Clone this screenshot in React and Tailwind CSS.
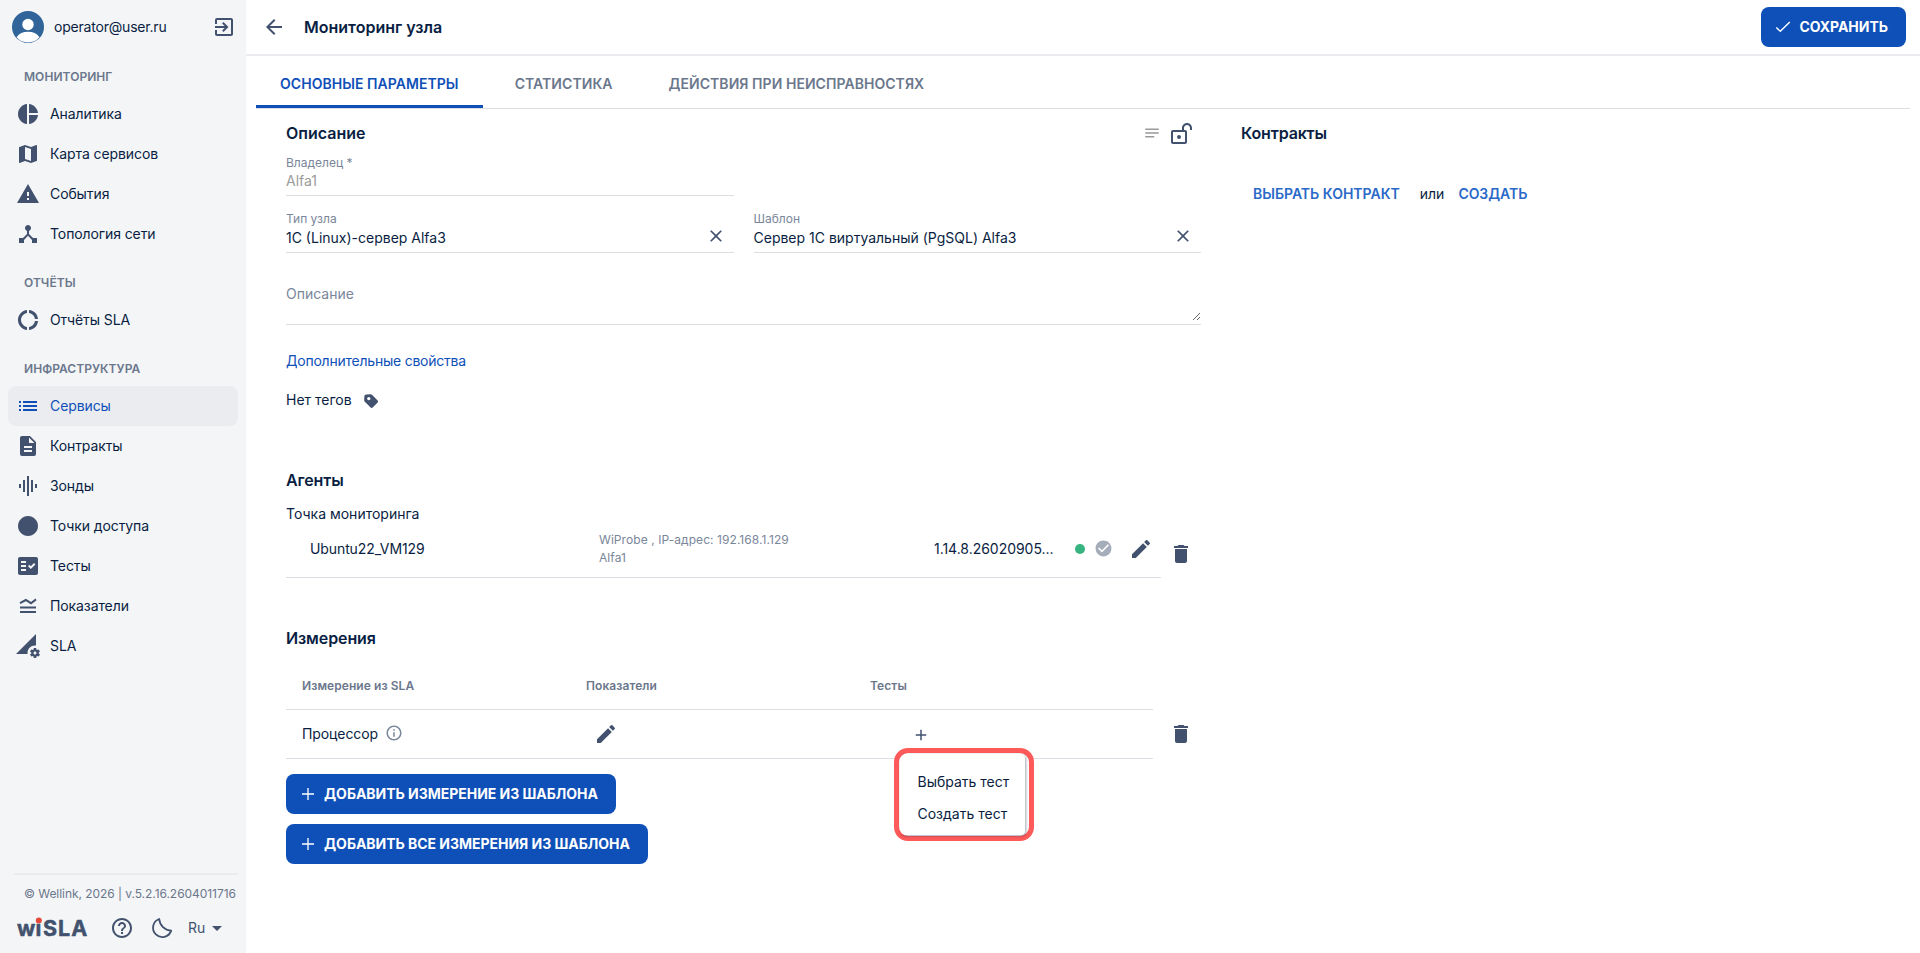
import React, { useState } from "react";
import {
  MdPieChart,
  MdMap,
  MdWarning,
  MdDeviceHub,
  MdDonutLarge,
  MdList,
  MdGraphicEq,
  MdCircle,
  MdFactCheck,
  MdPermDataSetting,
  MdHelpOutline,
  MdExitToApp,
  MdArrowBack,
  MdArrowDropDown,
  MdClose,
  MdEdit,
  MdDelete,
  MdAdd,
  MdCheckCircle,
  MdInfoOutline,
  MdNotes,
} from "react-icons/md";

const IndicatorsIcon = ({ size = 24 }) => (
  <svg width={size} height={size} viewBox="0 0 24 24" fill="none" stroke="currentColor" strokeWidth="2">
    <path d="M4 9.2 9.8 6 15 9.2 20 5.4" />
    <path d="M4 13.5h16M4 18h16" />
  </svg>
);

const DocIcon = ({ size = 24 }) => (
  <svg width={size} height={size} viewBox="0 0 24 24" fill="currentColor">
    <path d="M13 9h5.5L13 3.5V9M6 2h8l6 6v12a2 2 0 0 1-2 2H6a2 2 0 0 1-2-2V4c0-1.11.89-2 2-2m10 12v-2H8v2h8m0 4v-2H8v2h8Z" />
  </svg>
);

const MoonIcon = () => (
  <svg width="24" height="24" viewBox="0 0 24 24" fill="none" stroke="currentColor" strokeWidth="1.8" strokeLinejoin="round">
    <path d="M9.2 3A9.3 9.3 0 1 0 21.2 14.6A12.5 12.5 0 0 1 9.2 3Z" />
  </svg>
);

const LockOpenIcon = () => (
  <svg width="24" height="24" viewBox="0 0 24 24" fill="currentColor">
    <path d="M18 1c-2.76 0-5 2.24-5 5v2H4c-1.1 0-2 .89-2 2v10c0 1.11.9 2 2 2h12c1.11 0 2-.89 2-2V10c0-1.1-.89-2-2-2h-1V6c0-1.66 1.34-3 3-3s3 1.34 3 3v2h2V6c0-2.76-2.24-5-5-5m-8 12c1.1 0 2 .89 2 2a2 2 0 1 1-2-2m6-3v10H4V10h12Z" />
  </svg>
);

const TagIcon = () => (
  <svg width="14" height="14" viewBox="0 0 14 14" fill="currentColor">
    <path d="M2.5.5 6.5.2c.6 0 1.1.2 1.5.6l5.4 5.5c.8.8.8 1.7 0 2.5l-4.5 4.5c-.8.8-1.7.8-2.5 0L.8 7.8C.4 7.4.2 7 .2 6.4L.3 2.7C.4 1.3 1.1.6 2.5.5ZM4.8 6.3a1.7 1.7 0 1 0 0-3.4 1.7 1.7 0 0 0 0 3.4Z" fillRule="evenodd" />
  </svg>
);

const PlusIcon = () => (
  <svg width="16" height="16" viewBox="0 0 16 16" fill="none" stroke="currentColor" strokeWidth="1.3">
    <path d="M8 2v12M2 8h12" />
  </svg>
);

const CheckIcon = () => (
  <svg width="16" height="16" viewBox="0 0 16 16" fill="none" stroke="currentColor" strokeWidth="1.4">
    <path d="M1.3 8.5 5.3 12.3 14.8 3" />
  </svg>
);

const Logo = () => (
  <svg width="74" height="24" viewBox="0 0 74 24" className="overflow-visible">
    <text
      x="0 18.5 26 41 54.2"
      y="20"
      fontSize="21.5"
      fontWeight="700"
      fill="currentColor"
      stroke="currentColor"
      strokeWidth="0.5"
      strokeLinejoin="round">
      wiSLA
    </text>
    <circle cx="21.8" cy="4.4" r="3" fill="#e5493a" />
  </svg>
);

const menu = [
  {
    title: "МОНИТОРИНГ",
    items: [
      { name: "Аналитика", icon: MdPieChart },
      { name: "Карта сервисов", icon: MdMap },
      { name: "События", icon: MdWarning },
      { name: "Топология сети", icon: MdDeviceHub },
    ],
  },
  {
    title: "ОТЧЁТЫ",
    items: [{ name: "Отчёты SLA", icon: MdDonutLarge }],
  },
  {
    title: "ИНФРАСТРУКТУРА",
    items: [
      { name: "Сервисы", icon: MdList },
      { name: "Контракты", icon: DocIcon },
      { name: "Зонды", icon: MdGraphicEq },
      { name: "Точки доступа", icon: MdCircle },
      { name: "Тесты", icon: MdFactCheck },
      { name: "Показатели", icon: IndicatorsIcon },
      { name: "SLA", icon: MdPermDataSetting },
    ],
  },
];

function Sidebar() {
  const [active, setActive] = useState("Сервисы");

  return (
    <aside className="flex w-[246px] shrink-0 flex-col bg-[#f4f5f7]">
      <div className="flex h-[54px] items-center pl-3 pr-[10px]">
        <svg width="32" height="32" viewBox="0 0 32 32">
          <circle cx="16" cy="16" r="16" fill="#316499" />
          <circle cx="16" cy="13.5" r="5.7" fill="#fff" />
          <path d="M4.5 26.2C7 22.5 11 20.8 16 20.8s9 1.7 11.5 5.4A15.4 15.4 0 0 1 16 31.4 15.4 15.4 0 0 1 4.5 26.2Z" fill="#fff" />
        </svg>
        <span className="ml-[10px] flex-1 tracking-[-0.2px] text-[#091e42]">operator@user.ru</span>
        <MdExitToApp size={24} className="text-[#42526e]" />
      </div>

      <nav className="mt-1 flex flex-1 flex-col gap-[10px]">
        {menu.map((group) => (
          <div key={group.title}>
            <div className="flex h-9 items-center pt-[2px] pl-6 text-xs font-semibold tracking-[0.05px] text-[#6b778c]">
              {group.title}
            </div>
            {group.items.map(({ name, icon: Icon }) => (
              <button
                key={name}
                onClick={() => setActive(name)}
                className={
                  active === name
                    ? "mx-2 flex h-10 w-[230px] items-center gap-[10px] rounded-lg bg-[#ebecf0] pl-2 text-[#0f50b8]"
                    : "mx-2 flex h-10 w-[230px] items-center gap-[10px] rounded-lg pl-2 text-[#42526e]"
                }>
                <Icon size={24} />
                <span
                  className={
                    active === name
                      ? "tracking-[-0.1px] text-[#0f50b8]"
                      : "tracking-[-0.1px] text-[#091e42]"
                  }>
                  {name}
                </span>
              </button>
            ))}
          </div>
        ))}
      </nav>

      <div className="ml-[14px] mr-2 h-[80px] border-t-2 border-[#ebecf0]">
        <p className="mt-[11px] pl-[10px] text-xs leading-4 tracking-[-0.05px] whitespace-nowrap text-[#6b778c]">
          © Wellink, 2026 | v.5.2.16.2604011716
        </p>
        <div className="mt-[14px] flex h-6 items-center pl-[3px] text-[#42526e]">
          <Logo />
          <MdHelpOutline size={24} className="ml-[19px]" />
          <span className="ml-4">
            <MoonIcon />
          </span>
          <span className="ml-[14px]">Ru</span>
          <MdArrowDropDown size={24} />
        </div>
      </div>
    </aside>
  );
}

function Field({ label, value, disabled, clearable }) {
  return (
    <div className="flex h-[43px] flex-1 items-end border-b border-[#dcdee3]">
      <div className="flex-1">
        <div className="text-xs leading-4 text-[#7a869a]">{label}</div>
        <div
          className={
            disabled
              ? "pb-1 leading-5 text-[#9b9b9b]"
              : "pt-[1px] pb-1 leading-5 text-[#091e42]"
          }>
          {value}
        </div>
      </div>
      {clearable && <MdClose size={20} className="mr-2 mb-[6px] text-[#42526e]" />}
    </div>
  );
}

function PrimaryButton({ children }) {
  return (
    <button className="flex h-10 items-center gap-2 rounded-lg bg-[#0f50b8] pr-[18px] pl-[14px] font-bold tracking-[-0.03px] text-white">
      {children}
    </button>
  );
}

function Agents() {
  return (
    <section>
      <h2 className="mt-[60px] text-base leading-5 font-semibold tracking-[-0.1px]">Агенты</h2>
      <p className="mt-[14px] leading-5">Точка мониторинга</p>
      <div className="flex">
        <div className="flex h-[54px] w-[875px] items-center border-b border-[#dcdee3] pb-1 pl-6">
          <span className="w-[289px] tracking-[-0.1px]">Ubuntu22_VM129</span>
          <div className="w-[335px] text-xs leading-[18px] tracking-[0.07px] text-[#7a869a]">
            <div>WiProbe , IP-адрес: 192.168.1.129</div>
            <div>Alfa1</div>
          </div>
          <span className="w-[120px] tracking-[-0.03px] whitespace-nowrap">1.14.8.26020905...</span>
          <span className="ml-[21px] size-[10px] rounded-full bg-[#36b37e]" />
          <MdCheckCircle size={19} className="ml-[9px] text-[#a5adba]" />
          <MdEdit size={24} className="ml-4 text-[#42526e]" />
        </div>
        <MdDelete size={24} className="mt-[18px] ml-2 text-[#42526e]" />
      </div>
    </section>
  );
}

function Measurements() {
  const [open, setOpen] = useState(true);

  return (
    <section>
      <h2 className="mt-[50px] text-base leading-5 font-semibold tracking-[-0.1px]">Измерения</h2>
      <div className="mt-[13px] grid h-[49px] w-[867px] grid-cols-[284px_284px_1fr] items-center border-b border-[#dcdee3] pt-[2px] pl-4 text-xs font-semibold tracking-[0.07px] text-[#6b778c]">
        <span>Измерение из SLA</span>
        <span>Показатели</span>
        <span>Тесты</span>
      </div>
      <div className="flex items-center">
        <div className="grid h-[49px] w-[867px] grid-cols-[284px_284px_1fr] items-center border-b border-[#dcdee3] pl-4">
          <span className="flex items-center gap-[7px] tracking-[-0.1px]">
            Процессор
            <MdInfoOutline size={18} className="mb-[2px] text-[#7a869a]" />
          </span>
          <MdEdit size={24} className="ml-2 text-[#42526e]" />
          <div className="relative">
            <button onClick={() => setOpen(!open)} className="ml-[42px] block pt-[1px] text-[#42526e]">
              <MdAdd size={18} />
            </button>
            {open && (
              <div className="absolute top-[23px] left-6 h-[93px] w-[140px] rounded-[14px] border-5 border-[#ff5a5a] bg-white pt-px pl-[1px]">
                <div className="flex h-[81px] w-[125px] flex-col rounded pt-3 pl-[17.5px] shadow-[1px_1px_3px_rgba(9,30,66,0.4)]">
                  <span className="h-8 leading-8">Выбрать тест</span>
                  <span className="h-8 leading-8">Создать тест</span>
                </div>
              </div>
            )}
          </div>
        </div>
        <MdDelete size={24} className="mb-[2px] ml-4 text-[#42526e]" />
      </div>
      <div className="mt-[15px] flex flex-col items-start gap-[10px]">
        <PrimaryButton>
          <PlusIcon />
          ДОБАВИТЬ ИЗМЕРЕНИЕ ИЗ ШАБЛОНА
        </PrimaryButton>
        <PrimaryButton>
          <PlusIcon />
          ДОБАВИТЬ ВСЕ ИЗМЕРЕНИЯ ИЗ ШАБЛОНА
        </PrimaryButton>
      </div>
    </section>
  );
}

function App() {
  return (
    <div className="flex h-[953px] w-[1920px] overflow-hidden bg-white font-[Inter,sans-serif] text-sm text-[#091e42]">
      <Sidebar />
      <div className="flex-1">
        <header className="flex h-14 items-center border-b-2 border-[#ebecf0] pr-[14px] pl-4">
          <MdArrowBack size={24} className="text-[#42526e]" />
          <h1 className="ml-[18px] flex-1 text-base font-semibold">Мониторинг узла</h1>
          <PrimaryButton>
            <CheckIcon />
            СОХРАНИТЬ
          </PrimaryButton>
        </header>

        <div className="mr-[10px] ml-[10px] flex h-[53px] gap-2 border-b border-[#dcdee3] font-semibold tracking-[0.05px] text-[#6b778c]">
          <button className="border-b-3 border-[#0f50b8] px-6 pt-[6px] text-[#0f50b8]">ОСНОВНЫЕ ПАРАМЕТРЫ</button>
          <button className="border-b-3 border-transparent px-6 pt-[6px]">СТАТИСТИКА</button>
          <button className="border-b-3 border-transparent px-6 pt-[6px]">ДЕЙСТВИЯ ПРИ НЕИСПРАВНОСТЯХ</button>
        </div>

        <main className="flex pt-[14px] pl-10">
          <div className="w-[915px]">
            <div className="flex h-5 items-center">
              <h2 className="flex-1 text-base leading-5 font-semibold">Описание</h2>
              <MdNotes size={18} className="text-[#999]" />
              <span className="mt-[2px] mr-2 ml-2 text-[#42526e]">
                <LockOpenIcon />
              </span>
            </div>
            <div className="mt-[10px] flex w-[448px]">
              <Field label="Владелец *" value="Alfa1" disabled />
            </div>
            <div className="mt-[14px] flex gap-5">
              <Field label="Тип узла" value="1С (Linux)-сервер Alfa3" clearable />
              <Field label="Шаблон" value="Сервер 1С виртуальный (PgSQL) Alfa3" clearable />
            </div>
            <div className="mt-[31px] flex h-[41px] items-end justify-between border-b border-[#dcdee3]">
              <span className="self-start leading-5 text-[#7a869a]">Описание</span>
              <svg width="9" height="9" viewBox="0 0 9 9" className="mb-[3px]" stroke="#666" strokeWidth="1">
                <path d="M1 8 8 1M5 8 8 5" />
              </svg>
            </div>
            <p className="mt-[26px] leading-5 tracking-[-0.23px] text-[#0f50b8]">Дополнительные свойства</p>
            <p className="mt-[19px] flex items-center gap-3 leading-5">
              Нет тегов
              <span className="mt-[2px] text-[#42526e]">
                <TagIcon />
              </span>
            </p>
            <Agents />
            <Measurements />
          </div>

          <div className="pl-10">
            <h2 className="text-base leading-5 font-semibold tracking-[-0.15px]">Контракты</h2>
            <div className="mt-[41px] flex items-center pl-3 leading-5">
              <button className="font-semibold text-[#2a69c8]">ВЫБРАТЬ КОНТРАКТ</button>
              <span className="ml-5">или</span>
              <button className="ml-[14px] font-semibold tracking-[-0.05px] text-[#2a69c8]">СОЗДАТЬ</button>
            </div>
          </div>
        </main>
      </div>
    </div>
  );
}

export default App;
